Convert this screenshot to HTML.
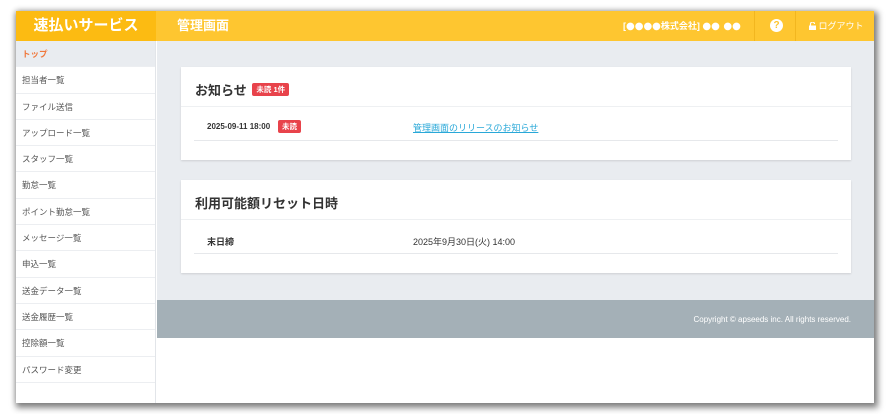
<!DOCTYPE html>
<html><head><meta charset="utf-8"><style>
*{box-sizing:border-box;margin:0;padding:0}
body{width:890px;height:414px;background:#fff;position:relative;overflow:hidden;font-family:"Liberation Sans","Noto Sans CJK JP",sans-serif}
#f{position:absolute;left:16px;top:11px;width:858px;height:392px;background:#fff;box-shadow:2px 3px 6px 2px rgba(0,0,0,.45),0 0 6px rgba(0,0,0,.2);overflow:hidden}
#hd{position:absolute;left:0;top:0;width:858px;height:30px;background:#fec630}
#logo{position:absolute;left:0;top:0;width:140px;height:30px;background:#fcbb12;color:#fff;font-weight:bold;font-size:15px;line-height:30px;text-align:center}
#ttl{position:absolute;left:161px;top:0;line-height:30px;color:#fff;font-weight:bold;font-size:13px}
#co{position:absolute;left:607px;top:0;line-height:30px;color:#fff;font-size:9px;font-weight:bold}
#co b{font-family:"DejaVu Sans",sans-serif;font-size:10px}
.sep{position:absolute;top:0;width:1px;height:30px;background:#f2b61f}
#q{position:absolute;left:754px;top:8px;width:13px;height:13px;border-radius:50%;background:#fff;color:#fec630;font-size:10px;font-weight:bold;text-align:center;line-height:13px}
#lo{position:absolute;left:793px;top:0;line-height:30px;color:#fff;font-size:9px}
#sb{position:absolute;left:0;top:30px;width:140px;height:362px;background:#fff;border-right:1px solid #e2e5e9}
.it{height:26.3px;line-height:26px;padding-left:6px;font-size:8.5px;color:#555;border-bottom:1px solid #eceef1}
.it.a{background:#e9ecf0;color:#f0783c;font-weight:bold}
#mn{position:absolute;left:141px;top:30px;width:717px;height:259px;background:#e9ecf0}
.cd{position:absolute;left:24px;width:670px;height:93px;background:#fff;box-shadow:0 1px 2px rgba(0,0,0,.12)}
.ch{height:40px;border-bottom:1px solid #eef0f2;padding-left:14px;line-height:48px;font-size:13px;font-weight:bold;color:#333}
.rw{position:relative;margin:0 13px;height:34px;border-bottom:1px solid #e6e8eb;font-size:9px;color:#333}
.bd{display:inline-block;background:#e8434b;color:#fff;font-size:7.5px;font-weight:bold;border-radius:2px;padding:0 4px;line-height:13px;vertical-align:middle}
#ft{position:absolute;left:141px;top:289px;width:717px;height:38px;background:#a4b0b7;color:#fff;font-size:8px;text-align:right;padding-right:23px;line-height:40px}
</style></head><body>
<div id="f">
<div id="hd"><div id="logo">速払いサービス</div><div id="ttl">管理画面</div>
<div id="co">[<b>●●●●</b>株式会社] <b>●● ●●</b></div>
<div class="sep" style="left:738px"></div><div class="sep" style="left:779px"></div>
<div id="q">?</div><div id="lo"><svg width="7" height="8" viewBox="0 0 7 8" style="vertical-align:-1px"><rect x="0" y="3.5" width="7" height="4.5" fill="#fff"/><path d="M1.5 3.5V2a2 2 0 0 1 4 0" stroke="#fff" stroke-width="1.2" fill="none"/></svg> ログアウト</div></div>
<div id="sb">
<div class="it a">トップ</div><div class="it">担当者一覧</div><div class="it">ファイル送信</div><div class="it">アップロード一覧</div><div class="it">スタッフ一覧</div><div class="it">勤怠一覧</div><div class="it">ポイント勤怠一覧</div><div class="it">メッセージ一覧</div><div class="it">申込一覧</div><div class="it">送金データ一覧</div><div class="it">送金履歴一覧</div><div class="it">控除額一覧</div><div class="it">パスワード変更</div>
</div>
<div id="mn">
<div class="cd" style="top:26px"><div class="ch">お知らせ <span class="bd" style="position:relative;top:-2px;margin-left:2px">未読 1件</span></div>
<div class="rw"><span style="position:absolute;left:13px;top:15px;font-weight:bold;font-size:8px">2025-09-11 18:00</span><span class="bd" style="position:absolute;left:84px;top:13px">未読</span><span style="position:absolute;left:219px;top:14px;color:#29a8d8;text-decoration:underline;font-size:9px">管理画面のリリースのお知らせ</span></div></div>
<div class="cd" style="top:139px"><div class="ch">利用可能額リセット日時</div>
<div class="rw"><span style="position:absolute;left:13px;top:15px;font-weight:bold">末日締</span><span style="position:absolute;left:219px;top:15px">2025年9月30日(火) 14:00</span></div></div>
</div>
<div id="ft">Copyright © apseeds inc. All rights reserved.</div>
</div>
</body></html>
